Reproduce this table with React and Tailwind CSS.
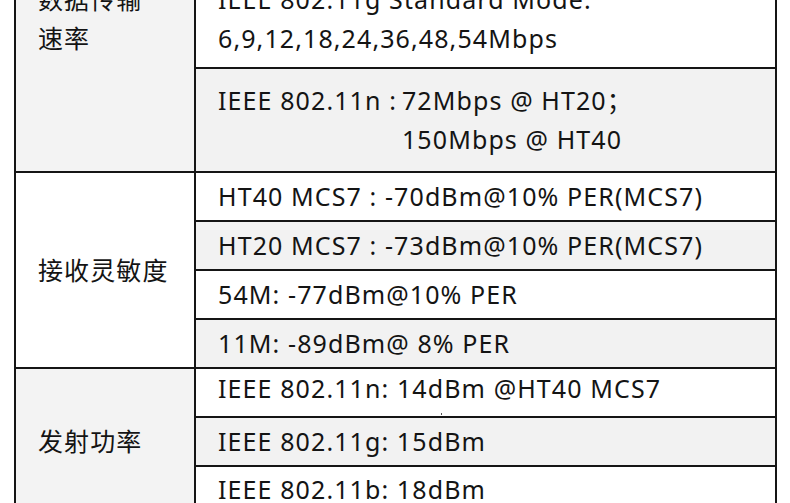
export default function App() {
  const font = { fontFamily: '"Noto Sans", "Noto Sans CJK SC", sans-serif' };
  const row = "flex items-center pl-[22px] h-[49px] border-b-2 border-[#151515]";
  const last = "flex items-center pl-[22px] h-[47px]";
  return (
    <div className="w-[790px] h-[503px] overflow-hidden bg-white text-[#141414] text-[25px] leading-[39px] tracking-[1.1px]" style={font}>
      <div className="-mt-[32px] ml-[14px] w-[763px] border-x-2 border-[#151515]">
        {/* Group 1 */}
        <div className="flex border-b-2 border-[#151515]">
          <div className="w-[180px] shrink-0 border-r-2 border-[#151515] bg-[#f3f3f3] pl-[22px] pt-[12px]">
            <div>数据传输</div>
            <div>速率</div>
          </div>
          <div className="flex-1 flex flex-col">
            <div className="bg-white pl-[22px] pt-[12px] pb-[9px] border-b-2 border-[#151515]">
              <div>IEEE 802.11g Standard Mode:</div>
              <div>6,9,12,18,24,36,48,54Mbps</div>
            </div>
            <div className="bg-[#f2f2f2] pl-[22px] py-[12px] flex">
              <span className="whitespace-pre">IEEE 802.11n :</span>
              <div className="ml-[5px]">
                <div>72Mbps @ HT20；</div>
                <div>150Mbps @ HT40</div>
              </div>
            </div>
          </div>
        </div>
        {/* Group 2 */}
        <div className="flex border-b-2 border-[#151515]">
          <div className="w-[180px] shrink-0 border-r-2 border-[#151515] bg-white pl-[22px] flex items-center">
            <div>接收灵敏度</div>
          </div>
          <div className="flex-1 flex flex-col">
            <div className={`${row} bg-white`}>HT40 MCS7 : -70dBm@10% PER(MCS7)</div>
            <div className={`${row} bg-[#f2f2f2]`}>HT20 MCS7 : -73dBm@10% PER(MCS7)</div>
            <div className={`${row} bg-white`}>54M: -77dBm@10% PER</div>
            <div className={`${last} bg-[#f2f2f2]`}>11M: -89dBm@ 8% PER</div>
          </div>
        </div>
        {/* Group 3 */}
        <div className="flex border-b-2 border-[#151515]">
          <div className="w-[180px] shrink-0 border-r-2 border-[#151515] bg-[#f3f3f3] pl-[22px] flex items-center">
            <div>发射功率</div>
          </div>
          <div className="flex-1 flex flex-col">
            <div className={`${row} relative bg-white pb-[8px]`}>
              IEEE 802.11n: 14dBm @HT40 MCS7
              <span className="absolute left-[245px] top-[44px] w-[1px] h-[2px] bg-[#555]"></span>
            </div>
            <div className={`${row} bg-[#f2f2f2]`}>IEEE 802.11g: 15dBm</div>
            <div className={`${last} bg-white pb-[3px]`}>IEEE 802.11b: 18dBm</div>
          </div>
        </div>
      </div>
    </div>
  );
}
